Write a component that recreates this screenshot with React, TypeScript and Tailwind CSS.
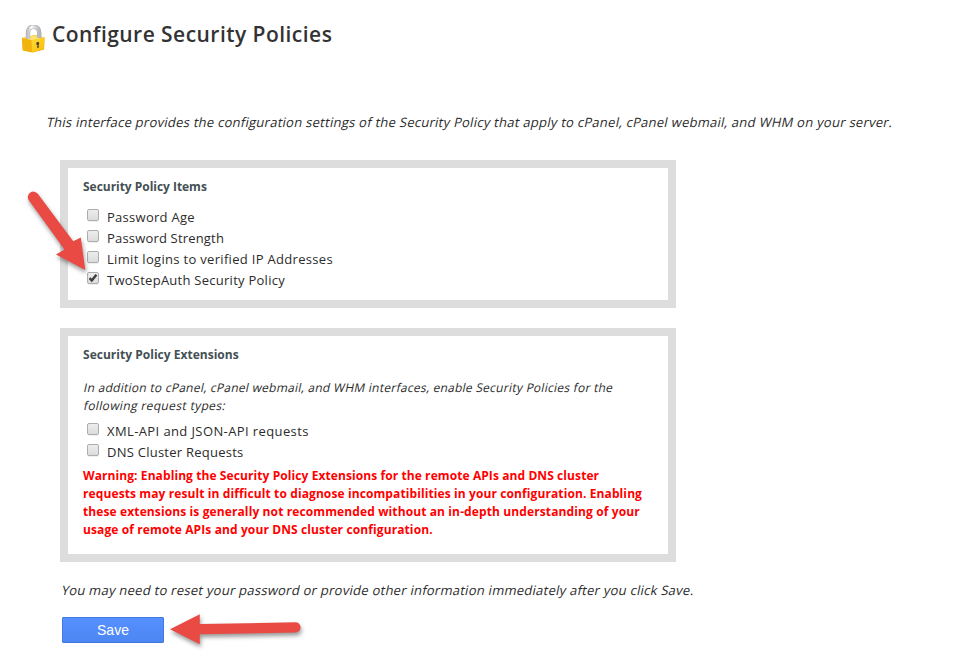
import type { ReactNode } from "react";

function Slanted({ className, children }: { className: string; children: ReactNode }) {
  return (
    <p className={"origin-[0_75%] -skew-x-12 whitespace-nowrap leading-[18px] " + className}>
      {children}
    </p>
  );
}

function CheckRow({ label, tracking, checked = false }: { label: string; tracking: string; checked?: boolean }) {
  return (
    <label className="flex h-[21px] items-center pl-1">
      <span className="mb-[5px] flex size-[12px] shrink-0 items-center justify-center rounded-[2px] border border-[#adadad] bg-linear-to-b from-[#ededed] to-[#dcdcdc] shadow-[0_1px_0_#f0f0f0]">
        {checked && (
          <svg className="size-[10px] shrink-0" viewBox="0 0 10 10" fill="none">
            <path d="M1.6 5.2 L3.8 7.5 L8.4 1.8" stroke="#3c3c3c" strokeWidth="2.4" />
          </svg>
        )}
      </span>
      <span className={"ml-2 whitespace-nowrap text-[13px] leading-[21px] " + tracking}>{label}</span>
    </label>
  );
}

function Padlock() {
  return (
    <svg className="mt-[5px] h-[28px] w-[25px] shrink-0" viewBox="0 0 25 28">
      <defs>
        <linearGradient id="front" x1="0" y1="0" x2="1" y2="1">
          <stop offset="0" stopColor="#ffdf3c" />
          <stop offset="1" stopColor="#fbb800" />
        </linearGradient>
        <linearGradient id="steel" x1="0" y1="0" x2="1" y2="0">
          <stop offset="0" stopColor="#c4c4c4" />
          <stop offset="0.3" stopColor="#fafafa" />
          <stop offset="1" stopColor="#b4b6ba" />
        </linearGradient>
      </defs>
      <path d="M1 13 L14 10 L23.500 12.500 L23 24.500 L11.500 27.500 L1.800 25.500 Z" fill="#e9a800" />
      <path d="M1 13 L14 10.500 L23.500 12.500 L10.500 15.500 Z" fill="#ffe36b" />
      <path d="M1 13 L10.500 15.500 L11 27.300 L1.800 25.300 Z" fill="#f2b40c" />
      <path d="M10.500 15.500 L23.500 12.500 L23 24.300 L11 27.300 Z" fill="url(#front)" />
      <path d="M7 14 V7.500 C7 3.500 9.500 1.800 12.500 1.800 C16 1.800 18.200 4 18.200 7.500 V13" fill="none" stroke="#a9abae" strokeWidth="4.400" />
      <path d="M7 14 V7.500 C7 3.500 9.500 1.800 12.500 1.800 C16 1.800 18.200 4 18.200 7.500 V13" fill="none" stroke="url(#steel)" strokeWidth="3.200" />
      <path d="M15.300 18.200 C15.500 16.700 18.200 16.500 18.200 18.400 C18.200 19.200 17.700 19.600 17.500 20 L18 22.500 L16.200 22.900 L16.400 20.300 C15.600 19.800 15.200 19.100 15.300 18.200 Z" fill="#44412b" />
    </svg>
  );
}

export default function App() {
  return (
    <main className="relative h-[658px] w-[960px] overflow-hidden bg-white font-['Open_Sans','Noto_Sans',sans-serif] text-[#2b2b2b]">
      <header className="flex h-[54px] items-start pl-[21px] pt-5">
        <Padlock />
        <h1 className="ml-[6px] whitespace-nowrap text-[21px] font-semibold leading-7 tracking-[0.46px] text-[#333333]">
          Configure Security Policies
        </h1>
      </header>

      <Slanted className="ml-[46px] mt-[59px] w-fit text-[13px] tracking-[0.265px]">
        This interface provides the configuration settings of the Security Policy that apply to cPanel, cPanel webmail, and WHM on your server.
      </Slanted>

      <section className="ml-[60px] mt-[29px] h-[148px] w-[616px] border-8 border-[#dddddd] pl-[15px] pt-[10px]">
        <h2 className="mb-[11px] text-[12px] font-bold leading-[18px] tracking-[-0.03px] text-[#444f54]">Security Policy Items</h2>
        <CheckRow label="Password Age" tracking="tracking-[0.28px]" />
        <CheckRow label="Password Strength" tracking="tracking-[0.18px]" />
        <CheckRow label="Limit logins to verified IP Addresses" tracking="tracking-[0.315px]" />
        <CheckRow label="TwoStepAuth Security Policy" tracking="tracking-[0.26px]" checked />
      </section>

      <section className="ml-[60px] mt-5 h-[234px] w-[616px] border-8 border-[#dddddd] pl-[15px] pt-[10px]">
        <h2 className="mb-[15px] text-[12px] font-bold leading-[18px] tracking-[0.02px] text-[#444f54]">Security Policy Extensions</h2>
        <Slanted className="w-fit text-[12px] tracking-[0.265px]">
          In addition to cPanel, cPanel webmail, and WHM interfaces, enable Security Policies for the
        </Slanted>
        <Slanted className="mb-[6px] w-fit text-[12px] tracking-[0.36px]">following request types:</Slanted>
        <CheckRow label="XML-API and JSON-API requests" tracking="tracking-[0.395px]" />
        <CheckRow label="DNS Cluster Requests" tracking="tracking-[0.25px]" />
        <p className="mt-[4px] whitespace-nowrap text-[12px] font-bold leading-[18px] text-[#ff0000]">
          <span className="block tracking-[0.087px]">Warning: Enabling the Security Policy Extensions for the remote APIs and DNS cluster</span>
          <span className="block tracking-[0.105px]">requests may result in difficult to diagnose incompatibilities in your configuration. Enabling</span>
          <span className="block tracking-[0.115px]">these extensions is generally not recommended without an in-depth understanding of your</span>
          <span className="block tracking-[0.11px]">usage of remote APIs and your DNS cluster configuration.</span>
        </p>
      </section>

      <Slanted className="ml-[61px] mt-[19px] w-fit text-[13px] tracking-[0.26px]">
        You may need to reset your password or provide other information immediately after you click Save.
      </Slanted>

      <button className="ml-[62px] mt-[18px] block h-[26px] w-[102px] rounded-[1px] border border-[#3f78e0] bg-linear-to-b from-[#5590ff] to-[#4c86f2] font-['Liberation_Sans',Arial,sans-serif] text-[14px] leading-6 text-white">
        Save
      </button>

      <svg className="pointer-events-none absolute inset-0 h-[658px] w-[960px] drop-shadow-[1px_3px_2px_rgba(0,0,0,0.4)]" viewBox="0 0 960 658" fill="#e94b44">
        <path d="M29 200.500 A5.500 5.500 0 0 1 37.800 193.800 L73.200 241.300 L80.800 237.500 L85.300 270 L56 254.500 L64.500 249.500 Z" />
        <path d="M170 629.300 L199.800 614.300 V624 L295.500 622.300 A5.100 5.100 0 0 1 295.500 632.500 L199.800 634.300 V644.200 Z" />
      </svg>
    </main>
  );
}
